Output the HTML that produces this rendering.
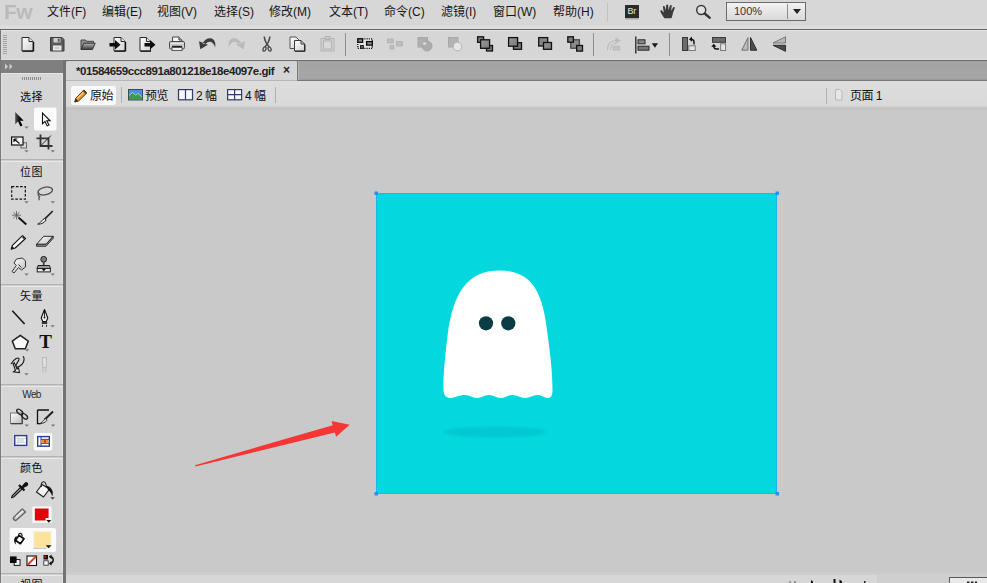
<!DOCTYPE html>
<html lang="zh-CN">
<head>
<meta charset="utf-8">
<title>Fireworks</title>
<style>
html,body{margin:0;padding:0;}
body{width:987px;height:583px;overflow:hidden;position:relative;background:#c9c9c9;
 font-family:"Liberation Sans","Noto Sans CJK SC",sans-serif;font-size:12px;color:#1a1a1a;}
.abs{position:absolute;}
#menubar{left:0;top:0;width:987px;height:29px;background:linear-gradient(#d7d7d7 0,#d7d7d7 25px,#dedede 27px,#dcdcdc 29px);}
#menubar .mi{position:absolute;top:4px;height:16px;line-height:16px;font-size:12px;white-space:nowrap;color:#151515;}
#logo{left:4px;top:0px;font-size:21px;font-weight:bold;color:#bababa;line-height:24px;letter-spacing:-0.5px;}
#tbline{left:0;top:29px;width:987px;height:1px;background:#666;}
#toolbar{left:0;top:30px;width:987px;height:30px;background:#d6d6d6;box-shadow:inset 0 1px 0 #e6e6e6, inset 0 -1px 0 #dfdfdf;}
#tabbar{left:0;top:60px;width:987px;height:20px;background:linear-gradient(#6c6c6c 0,#6c6c6c 1px,#a3a3a3 1px,#a6a6a6 18px,#999 20px);}
#viewbar{left:66px;top:80px;width:921px;height:31px;background:linear-gradient(#dddddd 0,#d9d9d9 26px,#c6c6c6 27.5px,#c2c2c2 29px,#c9c9c9 31px);}
#doctab{left:66px;top:61px;width:232px;height:20px;background:#d4d4d4;border-radius:2px 2px 0 0;}
#doctab .t{position:absolute;left:10px;top:2px;font-size:11.5px;line-height:16px;font-weight:bold;color:#222;white-space:nowrap;letter-spacing:-0.44px;}
#doctab .x{position:absolute;left:217px;top:1px;font-size:12px;line-height:16px;color:#222;font-weight:bold;}
#left{left:0;top:60px;width:63px;height:523px;background:#d6d6d6;}
#leftborder{left:63px;top:60px;width:3px;height:523px;background:#727272;}
#leftedge{left:0;top:30px;width:1px;height:553px;background:#7a7a7a;}
#lhead{left:1px;top:60px;width:62px;height:13px;background:#7f7f7f;}
.vb{position:absolute;font-size:12px;line-height:14px;letter-spacing:-0.5px;white-space:nowrap;color:#111;}
.sep{position:absolute;width:1px;background:#9a9a9a;}
.lab{position:absolute;left:0;width:63px;text-align:center;font-size:11px;line-height:12px;color:#0c0c0c;letter-spacing:0.5px;}
.div{position:absolute;left:1px;width:62px;height:3px;background:linear-gradient(#b2b2b2 0,#b2b2b2 1px,#cdcdcd 1px,#cdcdcd 2px,#e9e9e9 2px);}
#bottombar{left:66px;top:575px;width:921px;height:8px;background:#d7d7d7;}
svg{position:absolute;overflow:visible;}
</style>
</head>
<body>
<div id="menubar" class="abs">
 <div id="logo" class="abs">Fw</div>
 <div class="mi" style="left:47px">文件(F)</div>
 <div class="mi" style="left:102px">编辑(E)</div>
 <div class="mi" style="left:157px">视图(V)</div>
 <div class="mi" style="left:214px">选择(S)</div>
 <div class="mi" style="left:269px">修改(M)</div>
 <div class="mi" style="left:329px">文本(T)</div>
 <div class="mi" style="left:384px">命令(C)</div>
 <div class="mi" style="left:441px">滤镜(I)</div>
 <div class="mi" style="left:493px">窗口(W)</div>
 <div class="mi" style="left:553px">帮助(H)</div>
 <div class="sep" style="left:607px;top:3px;height:19px;background:#c2c2c2"></div>
 <!-- Br icon -->
 <div class="abs" style="left:624.500px;top:5px;width:14.500px;height:13px;background:#2b2b2b;color:#e4e4e4;font-size:9px;line-height:12px;text-align:center;letter-spacing:-0.2px;box-shadow:0 1.500px 0 #a8a8a8">Br</div>
 <!-- zoom box -->
 <div class="abs" style="left:726px;top:2px;width:80px;height:19px;box-sizing:border-box;border:1px solid #6c6c6c;background:linear-gradient(#f2f2f2,#d9d9d9);"></div>
 <div class="abs" style="left:787px;top:4px;width:1px;height:15px;background:#8c8c8c"></div>
 <div class="mi" style="left:734px;top:3px;color:#333;font-size:11px">100%</div>
 <div class="abs" style="left:793px;top:9px;width:0;height:0;border-left:4px solid transparent;border-right:4px solid transparent;border-top:5px solid #222"></div>
</div>
<div id="tbline" class="abs"></div>
<div id="toolbar" class="abs"></div>
<!-- TOOLBAR ICONS -->
<svg class="abs" style="left:0;top:0" width="987" height="62" viewBox="0 0 987 62">
 <defs>
  <linearGradient id="pg" x1="0" y1="0" x2="1" y2="1"><stop offset="0" stop-color="#ffffff"/><stop offset="1" stop-color="#d0d0d0"/></linearGradient>
  <linearGradient id="fold" x1="0" y1="0" x2="0" y2="1"><stop offset="0" stop-color="#b8b8b8"/><stop offset="1" stop-color="#3a3a3a"/></linearGradient>
  <linearGradient id="sq" x1="0" y1="0" x2="1" y2="1"><stop offset="0" stop-color="#9a9a9a"/><stop offset="1" stop-color="#787878"/></linearGradient>
 </defs>
 <!-- grip -->
 <g stroke="#a2a2a2" stroke-width="1">
  <path d="M3,35.5h4M3,37.5h4M3,39.5h4M3,41.5h4M3,43.5h4M3,45.5h4M3,47.5h4M3,49.5h4M3,51.5h4M3,53.5h4"/>
 </g>
 <!-- hand (menubar) -->
 <path fill="#3a3a3a" transform="translate(667.600 11.300) scale(1.080 1) translate(-666.500 -12)" d="M663.5,19 C662,16.5 660.5,14 659.8,12.2 C659.5,11.2 660.6,10.6 661.4,11.4 L663,13.4 L662.2,7.6 C662,6.5 663.6,6.2 663.9,7.3 L665,11.3 L665.2,5.9 C665.2,4.8 666.9,4.8 667,5.9 L667.4,11 L668.6,6.3 C668.9,5.3 670.4,5.6 670.3,6.7 L669.7,11.6 L671.6,8.2 C672.1,7.3 673.5,7.9 673.1,8.9 L671.6,13.2 C671.2,15.4 670.8,17.2 670,19 Z"/>
 <!-- magnifier -->
 <circle cx="701.200" cy="10" r="4.500" fill="#e2e2e2" stroke="#3a3a3a" stroke-width="1.500"/>
 <path d="M704.700,13.500 L709.800,17.800" stroke="#333" stroke-width="2.300" stroke-linecap="round"/>

 <!-- new doc -->
 <g>
  <path d="M22,37.5 h7 l4,4 v9.5 h-11z" fill="url(#pg)" stroke="#2a2a2a" stroke-width="1"/>
  <path d="M29,37.5 v4 h4" fill="#e8e8e8" stroke="#2a2a2a" stroke-width="1"/>
  <path d="M22.5,51.2 h11 M33.6,42 v9.2" stroke="#111" stroke-width="1.2" fill="none"/>
 </g>
 <!-- save -->
 <g>
  <path d="M50.5,37.5 h11.5 l2,2 v11.5 h-13.5z" fill="#5a5a5a" stroke="#3a3a3a" stroke-width="1"/>
  <rect x="53.5" y="38" width="7" height="4.5" fill="#cfcfcf"/>
  <rect x="57.8" y="38.6" width="1.8" height="3.2" fill="#555"/>
  <rect x="53" y="45.5" width="8.5" height="5" fill="#e9e9e9"/>
  <path d="M54.5,48 h5" stroke="#aaa" stroke-width="1"/>
 </g>
 <!-- open -->
 <g>
  <path d="M81,49.5 v-9.5 h4.5 l1.2,1.3 h6.8 v2" fill="#8f8f8f" stroke="#444" stroke-width="1"/>
  <path d="M81,49.5 l2.8,-6.3 h11.4 l-2.8,6.3z" fill="url(#fold)" stroke="#333" stroke-width="1"/>
 </g>
 <!-- import -->
 <g>
  <path d="M114,37.5 h7 l4,4 v9.5 h-11z" fill="url(#pg)" stroke="#2a2a2a" stroke-width="1"/>
  <path d="M121,37.5 v4 h4" fill="#e8e8e8" stroke="#2a2a2a" stroke-width="1"/>
  <path d="M114.5,51.2 h11 M125.6,42 v9.2" stroke="#111" stroke-width="1.2" fill="none"/>
  <path d="M109.5,43 h5.5 v-3 l5.5,4.7 l-5.5,4.7 v-3 h-5.5z" fill="#0c0c0c"/>
 </g>
 <!-- export -->
 <g>
  <path d="M140,37.5 h6.5 l4,4 v9.5 h-10.5z" fill="url(#pg)" stroke="#2a2a2a" stroke-width="1"/>
  <path d="M146.5,37.5 v4 h4" fill="#e8e8e8" stroke="#2a2a2a" stroke-width="1"/>
  <path d="M140.5,51.2 h10.5" stroke="#111" stroke-width="1.2" fill="none"/>
  <path d="M144.5,43 h5.5 v-3 l5.5,4.7 l-5.5,4.7 v-3 h-5.5z" fill="#0c0c0c"/>
 </g>
 <!-- print -->
 <g>
  <path d="M172.500,42 v-5 h6.500 l3,3 v2z" fill="#f4f4f4" stroke="#4a4a4a" stroke-width="1"/>
  <path d="M179,37 v3 h3" fill="#d0d0d0" stroke="#333" stroke-width="1"/>
  <rect x="169.500" y="41.500" width="15" height="7.500" rx="1.400" fill="#cbcbcb" stroke="#4d4d4d" stroke-width="1"/>
  <path d="M170.500,43.500 h13" stroke="#e6e6e6" stroke-width="1"/>
  <rect x="172" y="45.800" width="10" height="1.700" fill="#222"/>
  <rect x="172" y="47.500" width="10" height="3" fill="#f0f0f0" stroke="#4d4d4d" stroke-width=".9"/>
 </g>
 <!-- undo -->
 <path fill="#3c3c3c" d="M199,41.200 L200.300,49.200 L207.900,44.700 Z M202.500,43.500 C204.500,39.800 207.500,38.100 210.500,38.300 C214.200,38.700 216.200,42.500 215.100,47.600 C214.400,44.200 212.200,41.800 209.600,41.800 C208,41.800 206.800,42.600 205.800,44.200 Z"/>
 <!-- redo (disabled) -->
 <path fill="#b9b9b9" d="M245,41.200 L243.700,49.200 L236.100,44.700 Z M241.500,43.500 C239.500,39.800 236.500,38.100 233.500,38.300 C229.800,38.700 227.800,42.500 228.900,47.600 C229.600,44.200 231.800,41.800 234.400,41.800 C236,41.800 237.200,42.600 238.200,44.200 Z"/>
 <!-- cut -->
 <g fill="none" stroke="#4a4a4a">
  <path d="M264.200,36.500 C264.800,41 266.800,44.500 269.200,47 M269.900,36.500 C269.300,41 267.300,44.500 264.900,47" stroke-width="1.600"/>
  <ellipse cx="264.500" cy="49" rx="1.400" ry="2.200" stroke-width="1.300" transform="rotate(20 264.500 49)"/>
  <ellipse cx="269.600" cy="49" rx="1.400" ry="2.200" stroke-width="1.300" transform="rotate(-20 269.600 49)"/>
 </g>
 <!-- copy -->
 <g>
  <path d="M290,37 h6 l3,3 v8.5 h-9z" fill="url(#pg)" stroke="#555" stroke-width="1"/>
  <path d="M294.5,40.5 h6.5 l3.5,3.5 v7 h-10z" fill="url(#pg)" stroke="#3a3a3a" stroke-width="1"/>
  <path d="M301,40.500 v3.500 h3.500" fill="none" stroke="#3a3a3a" stroke-width="1"/>
  <path d="M295,51.3 h10 M304.900,44.500 v6.800" stroke="#222" stroke-width="1.1"/>
 </g>
 <!-- paste (disabled) -->
 <g fill="none" stroke="#b3b3b3" stroke-width="1">
  <rect x="321" y="38.500" width="13" height="12.500" fill="#cfcfcf"/>
  <rect x="323.500" y="41" width="8" height="8" fill="#d8d8d8"/>
  <rect x="325" y="36.500" width="5" height="3" fill="#c6c6c6"/>
 </g>
 <!-- separators -->
 <g stroke="#8e8e8e" stroke-width="1">
  <path d="M345.5,33 v23 M593.500,33 v23 M669.500,33 v23"/>
 </g>
 <!-- group -->
 <g>
  <rect x="357.800" y="38.800" width="14.500" height="9.500" fill="#e4e4e4" stroke="#0a0a0a" stroke-width="1.300" stroke-dasharray="1.100 1.100"/>
  <rect x="357.800" y="38.800" width="4.800" height="3.500" fill="#8a8a8a" stroke="#0a0a0a" stroke-width="1.300"/>
  <rect x="366.600" y="41.600" width="5.700" height="3.500" fill="#8a8a8a" stroke="#0a0a0a" stroke-width="1.300"/>
  <rect x="360.600" y="45.600" width="2.700" height="2.700" fill="#777" stroke="#1a1a1a" stroke-width="1.100"/>
 </g>
 <!-- ungroup (disabled) -->
 <g fill="#bdbdbd" stroke="#b2b2b2" stroke-width=".8">
  <rect x="387.500" y="39" width="6" height="4"/>
  <rect x="396.500" y="41.500" width="6" height="4.500"/>
  <rect x="390" y="45.500" width="4" height="3.500"/>
 </g>
 <!-- join (disabled) -->
 <g>
  <rect x="418" y="37.500" width="9.500" height="9.500" fill="#b0b0b0" stroke="#a8a8a8"/>
  <circle cx="427" cy="46" r="5" fill="#adadad" stroke="#a6a6a6"/>
  <circle cx="424.500" cy="43.500" r="1.600" fill="#d9d9d9"/>
 </g>
 <!-- split (disabled) -->
 <g>
  <rect x="448.500" y="37.500" width="9.500" height="9.500" fill="#b3b3b3" stroke="#a9a9a9"/>
  <circle cx="457.500" cy="46.500" r="4.300" fill="#e6e6e6" stroke="#b5b5b5"/>
 </g>
 <!-- bring to front -->
 <g stroke="#111" stroke-width="1.300">
  <rect x="477.600" y="36.800" width="6" height="5.500" fill="#7d7d7d"/>
  <rect x="486.500" y="45.500" width="6" height="5.500" fill="#7d7d7d"/>
  <rect x="480.600" y="39.800" width="9" height="8.500" fill="url(#sq)"/>
 </g>
 <!-- bring forward -->
 <g stroke="#111" stroke-width="1.300">
  <rect x="513.500" y="42.700" width="8" height="6.600" fill="#7a7a7a"/>
  <rect x="508.600" y="37.600" width="9" height="8.600" fill="url(#sq)"/>
 </g>
 <!-- send backward -->
 <g stroke="#111" stroke-width="1.300">
  <rect x="538.700" y="37.600" width="9" height="8.400" fill="#858585"/>
  <rect x="543.500" y="42.500" width="8" height="6.800" fill="url(#sq)"/>
 </g>
 <!-- send to back -->
 <g stroke="#111" stroke-width="1.300">
  <rect x="570.800" y="39.800" width="8.600" height="8.400" fill="#8a8a8a" stroke="#444"/>
  <rect x="567.800" y="36.800" width="5.600" height="5.400" fill="#7d7d7d"/>
  <rect x="576.700" y="45.500" width="5.800" height="5.600" fill="#7d7d7d"/>
 </g>
 <!-- disabled curve icon -->
 <g fill="none" stroke="#bcbcbc" stroke-width="1.200">
  <path d="M607.500,50 c0,-6 3,-9.500 9,-9.500 M610.500,50 c0,-4 2,-6.500 6,-6.500"/>
  <path d="M616,38.500 l3.500,2 l-3.500,2z" fill="#bcbcbc"/>
  <rect x="613.500" y="46.500" width="6" height="3.500" fill="#c6c6c6"/>
 </g>
 <!-- align -->
 <g>
  <path d="M635.800,36.500 v17" stroke="#222" stroke-width="1.300"/>
  <rect x="638" y="39.800" width="7" height="4" fill="#888" stroke="#2a2a2a" stroke-width="1"/>
  <rect x="638" y="46.200" width="11" height="4" fill="#777" stroke="#2a2a2a" stroke-width="1"/>
  <path d="M651.800,43.300 h6.200 l-3.100,4.400z" fill="#1a1a1a"/>
 </g>
 <!-- rotate ccw -->
 <g>
  <rect x="682.500" y="37.500" width="5" height="13" fill="#6c6c6c" stroke="#3a3a3a" stroke-width="1"/>
  <rect x="688.800" y="45.800" width="6.500" height="4.700" fill="#e4e4e4" stroke="#7a7a7a" stroke-width="1"/>
  <path d="M694,44.500 v-2.500 c0,-1.800 -1,-2.800 -3,-2.800" fill="none" stroke="#111" stroke-width="1.400"/>
  <path d="M692,36.600 l-3,2.600 l3,2.600z" fill="#111"/>
 </g>
 <!-- rotate cw -->
 <g>
  <rect x="712.500" y="37.500" width="13" height="4.800" fill="#6c6c6c" stroke="#3a3a3a" stroke-width="1"/>
  <rect x="720.600" y="43.800" width="5" height="6.700" fill="#e4e4e4" stroke="#7a7a7a" stroke-width="1"/>
  <path d="M719,49 h-2.500 c-1.800,0 -2.800,-1 -2.800,-3" fill="none" stroke="#111" stroke-width="1.400"/>
  <path d="M711.200,46.800 l2.600,-3 l2.600,3z" fill="#111"/>
 </g>
 <!-- flip h -->
 <g stroke-width="1">
  <path d="M748,37.500 v12.700 h-6.300z" fill="#b9b9b9" stroke="#777"/>
  <path d="M750.500,37.500 v12.700 h6.300z" fill="#4c4c4c" stroke="#2c2c2c"/>
 </g>
 <!-- flip v -->
 <g stroke-width="1">
  <path d="M785.500,36.800 v6.200 h-12.500z" fill="#b9b9b9" stroke="#777"/>
  <path d="M785.500,51.300 v-6 h-12.500z" fill="#4c4c4c" stroke="#2c2c2c"/>
 </g>
</svg>
<div id="tabbar" class="abs"></div>
<div id="viewbar" class="abs"></div>
<div id="doctab" class="abs"><span class="t">*01584659ccc891a801218e18e4097e.gif</span><span class="x">×</span></div>

<!-- view bar content -->
<div class="abs" style="left:66px;top:80px;width:232px;height:1px;background:#b6b6b6"></div>
<div class="abs" style="left:298px;top:80px;width:689px;height:1px;background:#767676"></div>
<div class="abs" style="left:297px;top:61px;width:1px;height:20px;background:#7c7c7c"></div>
<div class="abs" style="left:298px;top:61px;width:1px;height:19px;background:#b4b4b4"></div>
<div class="abs" style="left:71px;top:86px;width:45px;height:19px;background:#fafafa;border-radius:3px;"></div>
<div class="vb" style="left:90px;top:89px">原始</div>
<div class="sep" style="left:121px;top:87px;height:16px;background:#b0b0b0"></div>
<div class="vb" style="left:145px;top:89px">预览</div>
<div class="vb" style="left:196px;top:89px">2 幅</div>
<div class="vb" style="left:245px;top:89px">4 幅</div>
<div class="sep" style="left:275px;top:87px;height:16px;background:#b0b0b0"></div>
<div class="sep" style="left:826px;top:88px;height:16px;background:#b0b0b0"></div>
<div class="vb" style="left:850px;top:89px">页面 1</div>

<!-- VIEWBAR ICONS -->
<svg class="abs" style="left:66px;top:80px" width="921" height="30" viewBox="66 80 921 30">
 <!-- pencil (orange) -->
 <g>
  <path d="M83.900,89.900 l3,3 l-8.300,8 l-3.900,1.200 l1.100,-3.900z" fill="#ee9a2a" stroke="#4e3210" stroke-width="1" stroke-linejoin="round"/>
  <path d="M74.800,102 l1,-3.200 l2.300,2.200z" fill="#2e2010"/>
  <path d="M83.900,89.900 l3,3 l-1.300,1.200 l-3,-3z" fill="#6e4418"/>
  <path d="M77.200,98.200 l6.200,-5.900" stroke="#fbd28a" stroke-width="1.100"/>
 </g>
 <!-- preview icon -->
 <g>
  <rect x="128.500" y="89.500" width="14" height="10.500" fill="#4b8fe2" stroke="#3c4a5c" stroke-width="1"/>
  <path d="M129,99.500 v-4 l3.500,-3 l3,2.600 l2.500,-1.600 l4,3.500 v2.500z" fill="#3c9a48"/>
  <path d="M129,95.500 l3.500,-3 l3,2.600 l2.500,-1.600 l4,3.500" fill="none" stroke="#cfe6c8" stroke-width=".7"/>
 </g>
 <!-- 2-up -->
 <g fill="#f7f7ff" stroke="#34396a" stroke-width="1.200">
  <rect x="178.500" y="89.600" width="14" height="10.200"/>
  <path d="M185.500,89.600 v10.200"/>
 </g>
 <!-- 4-up -->
 <g fill="#f7f7ff" stroke="#34396a" stroke-width="1.200">
  <rect x="227.600" y="89.600" width="14" height="10.200"/>
  <path d="M234.600,89.600 v10.200 M227.600,94.700 h14"/>
 </g>
 <!-- page icon (faint) -->
 <g fill="#e6e6e6" stroke="#b8b8b8" stroke-width="1">
  <path d="M835.500,89.500 h4.500 l2,2 v8.500 h-6.500z"/>
 </g>
</svg>
<!-- left panel -->
<div id="left" class="abs"></div>
<div id="leftborder" class="abs"></div>
<div id="lhead" class="abs"></div>
<div class="abs" style="left:1px;top:73px;width:62px;height:1px;background:#e6e6e6"></div>
<div class="abs" style="left:62px;top:73px;width:1px;height:510px;background:#e2e2e2"></div>
<div class="abs" style="left:1px;top:73px;width:1px;height:510px;background:#e0e0e0"></div>
<div id="leftedge" class="abs"></div>
<div class="lab" style="top:91px">选择</div>
<div class="div" style="top:159px"></div>
<div class="lab" style="top:166px">位图</div>
<div class="div" style="top:284px"></div>
<div class="lab" style="top:290px">矢量</div>
<div class="div" style="top:384px"></div>
<div class="lab" style="top:389px;letter-spacing:-0.7px;font-size:10px;color:#2a2a2a">Web</div>
<div class="div" style="top:456px"></div>
<div class="lab" style="top:462px">颜色</div>
<div class="div" style="top:573px"></div>
<div class="lab" style="top:579px">视图</div>

<!-- LEFT PANEL ICONS -->
<svg class="abs" style="left:0;top:60px" width="66" height="523" viewBox="0 60 66 523">
 <defs>
  <linearGradient id="ptr" x1="0" y1="0" x2="1" y2="0"><stop offset="0" stop-color="#555"/><stop offset=".6" stop-color="#000"/></linearGradient>
  <linearGradient id="wg" x1="0" y1="0" x2="1" y2="1"><stop offset="0" stop-color="#ffffff"/><stop offset="1" stop-color="#bdbdbd"/></linearGradient>
 </defs>
 <!-- header chevrons -->
 <path d="M5,63.500 l3,3 l-3,3z M9.500,63.500 l3,3 l-3,3z" fill="#cfcfcf"/>
 <!-- grip dots -->
 <path d="M22.500,77 v3 M24.500,77 v3 M26.500,77 v3 M28.500,77 v3 M30.500,77 v3 M32.500,77 v3 M34.500,77 v3 M36.500,77 v3 M38.500,77 v3 M40.500,77 v3" stroke="#8c8c8c" stroke-width="1"/>
 <!-- selected bg for subselect -->
 <rect x="34" y="107.500" width="22.500" height="23" rx="2" fill="#fbfbfb"/>
 <!-- pointer -->
 <path d="M15.200,112 v12.300 l2.800,-2.700 l2.400,4.900 l2.100,-1 l-2.400,-4.700 h3.600z" fill="url(#ptr)"/>
 <!-- subselect -->
 <path d="M42.500,113 v10.800 l2.500,-2.300 l2.200,4.400 l1.800,-0.800 l-2.200,-4.300 h3.300z" fill="#fff" stroke="#111" stroke-width="1.100" stroke-linejoin="miter"/>
 <!-- dropdown triangles (gray) -->
 <g fill="#7a7a7a">
  <path d="M24.300,126.400 h4.400 l-2.200,2.300z"/>
  <path d="M24.300,150.300 h4.400 l-2.200,2.300z"/>
  <path d="M50.600,150.300 h4.400 l-2.200,2.300z"/>
  <path d="M24.300,201.200 h4.400 l-2.200,2.300z"/>
  <path d="M50.600,201.200 h4.400 l-2.200,2.300z"/>
  <path d="M24.300,273.500 h4.400 l-2.200,2.300z"/>
  <path d="M50.600,273.500 h4.400 l-2.200,2.300z"/>
  <path d="M50.400,325.300 h4.400 l-2.200,2.300z"/>
  <path d="M25,349.300 h4.400 l-2.200,2.300z"/>
  <path d="M24.300,373.200 h4.400 l-2.200,2.300z"/>
  <path d="M24.500,424.500 h4.400 l-2.200,2.300z"/>
  <path d="M50.800,424.500 h4.400 l-2.200,2.300z"/>
  <path d="M50.400,497.200 h4.400 l-2.200,2.300z" fill="#333"/>
 </g>
 <!-- scale tool -->
 <rect x="21" y="142.800" width="5.500" height="5.200" fill="#dcdcdc" stroke="#666" stroke-width="1"/>
 <rect x="11.600" y="137" width="11.400" height="8" fill="#f4f4f4" stroke="#111" stroke-width="1.200"/>
 <path d="M14,139 l5.500,4.500 M14,139 h3.200 M14,139 v3" stroke="#111" stroke-width="1.200" fill="none"/>
 <!-- crop tool -->
 <g fill="none" stroke="#333" stroke-width="1.800">
  <path d="M40.500,134.500 v11.500 h12"/>
  <path d="M36.500,138.300 h12 v11.200"/>
 </g>
 <path d="M41.500,145 l9.500,-9.500" stroke="#222" stroke-width="1"/>
 <!-- marquee -->
 <rect x="11.700" y="186.600" width="13.600" height="12.600" fill="none" stroke="#111" stroke-width="1.200" stroke-dasharray="2.600 1.600"/>
 <!-- lasso -->
 <g fill="none" stroke="#4d4d4d" stroke-width="1.300">
  <ellipse cx="45.200" cy="191" rx="7.400" ry="3.800" transform="rotate(-12 45.200 191)"/>
  <path d="M39,192.500 c-1.400,1.800 -0.800,3.400 0.600,4.200 c-0.800,1 -1,2.200 -0.400,3.600"/>
 </g>
 <!-- wand -->
 <g stroke="#222" fill="none">
  <path d="M18.500,217.500 l7.800,7" stroke-width="1.900" stroke="#111"/>
  <path d="M16.500,211 v8.500 M12,215.200 h9 M13.400,212.200 l6.200,6 M19.600,212.200 l-6.200,6" stroke-width=".8" stroke="#555"/>
 </g>
 <!-- brush -->
 <path d="M52.800,211 l-9,8.800" stroke="#222" stroke-width="1.700"/>
 <path d="M44.600,218.400 l1.600,1.600 c-2,3 -5,4.300 -8.500,4.200 c2.300,-1 3.600,-3.400 6.900,-5.800z" fill="#e8e8e8" stroke="#222" stroke-width="1"/>
 <!-- pencil -->
 <g>
  <path d="M22.500,235.700 l3,2.800 l-10.300,9.500 l-4,1.200 l1.200,-3.800z" fill="#f6f6f6" stroke="#111" stroke-width="1.100" stroke-linejoin="round"/>
  <path d="M11.200,249.200 l1,-3 l2,1.900z" fill="#111"/>
  <circle cx="23.400" cy="237.700" r="1" fill="#222"/>
 </g>
 <!-- eraser -->
 <path d="M43.700,236.300 h9.500 l-7.200,8 h-9.500z" fill="url(#wg)" stroke="#2a2a2a" stroke-width="1"/>
 <path d="M36.500,244.300 h9.500 l7.200,-8 v2 l-7.200,8 h-9.500z" fill="#8a8a8a" stroke="#2a2a2a" stroke-width=".9"/>
 <!-- blur / finger -->
 <g>
  <path d="M16.500,259 l6,-1 l3,3 v6 l-4,3 l-3,-2.500 l-4.500,5.500 l-2,-1.500 l4.300,-6 l-2.300,-2.500z" fill="url(#wg)" stroke="#333" stroke-width="1"/>
  <path d="M18.500,264.500 l3,3" stroke="#333" stroke-width="1"/>
 </g>
 <!-- stamp -->
 <g>
  <circle cx="43.700" cy="259.300" r="2.900" fill="#7a7a7a" stroke="#222" stroke-width="1"/>
  <path d="M42.800,262 h1.800 v3.500 h-1.800z" fill="#444"/>
  <path d="M38,265.500 h11.500 l1,3 h-13.500z" fill="#999" stroke="#222" stroke-width="1"/>
  <rect x="37.200" y="268.500" width="13.200" height="3.400" fill="#e6e6e6" stroke="#222" stroke-width="1"/>
  <path d="M41.700,269 h4.200 l-2.100,2.300z" fill="#111"/>
 </g>
 <!-- line -->
 <path d="M12.300,310.800 l12.300,13.200" stroke="#111" stroke-width="1.500"/>
 <!-- pen -->
 <g>
  <path d="M44.500,309.500 l3.300,8.500 l-1.500,3.500 h-3.600 l-1.500,-3.500z" fill="#f0f0f0" stroke="#111" stroke-width="1.100" stroke-linejoin="round"/>
  <path d="M44.500,310.500 v6" stroke="#111" stroke-width=".9"/>
  <circle cx="44.500" cy="317.500" r="1" fill="#111"/>
  <rect x="41.800" y="322.200" width="5.400" height="1.600" fill="#111"/>
  <path d="M42.500,324.800 v2 M46.500,324.800 v2" stroke="#333" stroke-width="1"/>
 </g>
 <!-- polygon -->
 <path d="M20.300,335.300 l8,5.800 l-3,7.600 h-10 l-3,-7.600z" fill="#f8f8f8" stroke="#222" stroke-width="1.500" stroke-linejoin="round"/>
 <!-- freeform -->
 <g fill="none" stroke="#1a1a1a" stroke-width="1.100">
  <path d="M11,364 c3,-5 7,-7 8,-5.500 c1,1.500 -4,6 -3,8 c1,2 6,-1 7.500,-4.500 c0.800,-2.200 0.600,-4.500 -0.300,-5.800"/>
  <path d="M13,363.500 l2.500,6.800 l-2,1.500 l6,0.700 l-1,-4.500 l-1.500,1.200 l-2.600,-6.500z" fill="#eee"/>
 </g>
 <!-- knife (disabled) -->
 <g fill="#dedede" stroke="#b9b9b9" stroke-width=".9">
  <rect x="42.500" y="357.500" width="3.800" height="10"/>
  <path d="M43,367.500 v5 M45.800,367.500 v5"/>
 </g>
 <!-- hotspot tool -->
 <g>
  <rect x="10.500" y="413" width="11.500" height="10.500" fill="url(#wg)" stroke="#777" stroke-width="1"/>
  <path d="M11,423.800 h11.300 v-10" fill="none" stroke="#333" stroke-width="1"/>
  <g fill="none" stroke="#222" stroke-width="1.300">
   <ellipse cx="19.800" cy="412" rx="3.600" ry="2" transform="rotate(40 19.800 412)"/>
   <ellipse cx="24.500" cy="416.300" rx="3.600" ry="2" transform="rotate(40 24.500 416.300)"/>
  </g>
 </g>
 <!-- slice tool -->
 <g>
  <path d="M37.500,410 h11.500 M37.500,410 v13.700 h3" fill="none" stroke="#111" stroke-width="1.300"/>
  <path d="M53,411.500 l-8.500,8.200" stroke="#222" stroke-width="2"/>
  <path d="M45.500,418.700 l1.600,1.600 c-1.700,2 -4.300,3.300 -7.600,3.500 c2.200,-1 3.600,-2.900 6,-5.100z" fill="#e8e8e8" stroke="#222" stroke-width=".9"/>
 </g>
 <!-- hide slices -->
 <g>
  <rect x="14.700" y="435.600" width="12" height="9.800" fill="#fafafa" stroke="#2b3f93" stroke-width="1.400"/>
  <path d="M18,436 v9 M14.700,438.600 h12 M14.700,442.300 h12" stroke="#8a94c6" stroke-width=".8" stroke-dasharray="1 1"/>
  <rect x="18.500" y="439" width="5" height="3" fill="#d5e8cf"/>
 </g>
 <!-- show slices (selected) -->
 <rect x="33.800" y="433" width="18.400" height="17.500" rx="2" fill="#fbfbfb"/>
 <g>
  <rect x="37.700" y="436.600" width="11.600" height="9.600" fill="#fff" stroke="#2b3f93" stroke-width="1.400"/>
  <path d="M41,436.600 v9.600 M41,439.400 h8.300 M41,443.300 h8.300" stroke="#2b3f93" stroke-width="1"/>
  <rect x="41.600" y="439.900" width="7" height="2.900" fill="#f0922a"/>
  <rect x="44" y="439.900" width="2" height="2.900" fill="#e23a1e"/>
 </g>
 <!-- eyedropper -->
 <g>
  <path d="M20.500,487.500 l-8.200,8.200 l-0.700,2 l2,-0.700 l8.400,-8z" fill="#f2f2f2" stroke="#1a1a1a" stroke-width="1.300" stroke-linejoin="round"/>
  <path d="M19,485 l5.500,5.500" stroke="#111" stroke-width="2.200"/>
  <path d="M22,487.500 l3.200,-3.800 c1.300,-1.300 2.800,0.200 1.500,1.500z" fill="#222" stroke="#111" stroke-width="2"/>
 </g>
 <!-- paint bucket -->
 <g>
  <path d="M42,484.500 l7.500,4.500 l-6,8 l-7,-5z" fill="#f4f4f4" stroke="#222" stroke-width="1.200" stroke-linejoin="round"/>
  <path d="M41.500,487 c-0.800,-3 0.300,-5.300 2,-5.300 c1.700,0 2.700,2.200 2.800,5.500" fill="none" stroke="#222" stroke-width="1.100"/>
  <path d="M46,485.500 c3,0.500 5.600,2.500 6.500,5.500 c0.500,1.800 0.400,3.800 -0.300,5.200 c-0.800,-2.800 -2.200,-5 -4,-6z" fill="#111"/>
 </g>
 <!-- stroke pencil (gray) -->
 <path d="M22.300,509 l3.200,3 l-9,8 c-1.500,1.200 -4,-1.200 -2.700,-2.700z" fill="#cfcfcf" stroke="#666" stroke-width="1.500" stroke-linejoin="round"/>
 <path d="M15.800,517.200 l7.200,-6.500" stroke="#fafafa" stroke-width="1.100"/>
 <!-- red swatch -->
 <rect x="32.500" y="506.500" width="19" height="16.300" fill="#fdfdfd"/>
 <path d="M34.800,508.600 h13.800 v9.400 h-3 v2.600 h-10.800z" fill="#e00505"/>
 <path d="M46.300,519.900 h5 l-2.500,2.800z" fill="#111"/>
 <!-- fill row selected bg -->
 <rect x="9.600" y="528" width="46.500" height="24" rx="2" fill="#fbfbfb"/>
 <!-- small bucket -->
 <g>
  <path d="M19,535.500 l5,3.200 l-3.600,5 l-5,-3.500z" fill="#fff" stroke="#0a0a0a" stroke-width="1.700" stroke-linejoin="round"/>
  <path d="M18.600,536.500 c-0.300,-2 0.600,-3.300 1.700,-3.300 c1.100,0 1.900,1.300 1.900,3.400" fill="none" stroke="#111" stroke-width="1.100"/>
  <path d="M16.500,536 c-2,1 -2.800,3.500 -2.200,6 c0.300,1 0.800,2 1.500,2.500 c-0.300,-2 0,-4 1.200,-5.500z" fill="#111"/>
 </g>
 <!-- cream swatch -->
 <rect x="33.800" y="531.600" width="17.200" height="16.200" fill="#fbe39b" stroke="#f3f0e4" stroke-width="1"/>
 <path d="M33.500,548.300 h13" stroke="#bdbdbd" stroke-width="1"/>
 <path d="M45.800,545.300 h5.600 l-2.800,3z" fill="#111"/>
 <!-- small icons -->
 <rect x="14.200" y="559.600" width="5.800" height="5.800" fill="#fff" stroke="#111" stroke-width="1"/>
 <rect x="10" y="556.400" width="6.600" height="6.600" fill="#0a0a0a"/>
 <rect x="27" y="556" width="9.500" height="9.500" fill="#fff" stroke="#111" stroke-width="1.100"/>
 <path d="M27.500,565 l8.600,-8.600" stroke="#e23a1e" stroke-width="2"/>
 <rect x="43.500" y="555" width="4.500" height="4.500" fill="#111"/>
 <rect x="44.300" y="555.800" width="2" height="2" fill="#c41b1b"/>
 <rect x="43.800" y="560.800" width="4.400" height="4.400" fill="#fff" stroke="#333" stroke-width=".9"/>
 <path d="M50.500,556.800 c3.600,0.800 3.600,5.800 0,6.600" fill="none" stroke="#111" stroke-width="1.400"/>
 <path d="M48.800,556.800 l2.800,-2.300 v4.600z M48.800,563.400 l2.800,-2.300 v4.600z" fill="#111"/>
</svg>
<div class="abs" style="left:39px;top:332px;width:13px;text-align:center;font-family:'Liberation Serif',serif;font-weight:bold;font-size:19px;line-height:20px;color:#111">T</div>
<!-- canvas -->
<div class="abs" id="doc" style="left:376px;top:193px;width:401px;height:301px;background:#04d7dd;box-sizing:border-box;border:1px solid #22b2ee;"></div>
<svg class="abs" style="left:0;top:0" width="987" height="583" viewBox="0 0 987 583">
 <!-- shadow -->
 <defs><filter id="bl" x="-10%" y="-50%" width="120%" height="200%"><feGaussianBlur stdDeviation="0.9"/></filter></defs>
 <ellipse cx="495" cy="432" rx="51" ry="5.500" fill="#02c9d1" filter="url(#bl)"/>
 <!-- ghost -->
 <path fill="#ffffff" d="M499.500,270.500 C467,270.500 453,293 447.500,336 C445,358 443,376 443.500,390 C443.700,396 447,398.300 451,398 C456,397.600 459,395 464.800,395 C470,395 472,398 477,398 C482,398 484,395 488.900,395 C494,395 496,398 500.500,398 C505.500,398 507.500,395 512.300,395 C517.500,395 520,398 525,398 C530,398 532.500,395 537.800,395 C542,395 544,398 547.500,398 C551,398 552.500,395.500 552.500,390 C552.500,372 550,352 547.500,334 C543,292 532,270.500 499.500,270.500 Z"/>
 <circle cx="486" cy="323.3" r="7.1" fill="#0b3b45"/>
 <circle cx="508.3" cy="323.3" r="7.1" fill="#0b3b45"/>
 <!-- handles -->
 <g fill="#2a8ff0">
  <rect x="374.5" y="191.5" width="3.5" height="3.5"/>
  <rect x="775.5" y="191.5" width="3.5" height="3.5"/>
  <rect x="374.5" y="492" width="3.5" height="3.5"/>
  <rect x="775.5" y="492" width="3.5" height="3.5"/>
 </g>
 <!-- red arrow -->
 <path fill="#f63535" d="M195,465.200 L332.800,425.300 L331.400,421.100 L349.700,424.800 L336.100,436.700 L334.800,432.400 L195.500,466.500 Z"/>
</svg>
<div id="bottombar" class="abs"></div>
<div class="abs" style="left:66px;top:571px;width:921px;height:4px;background:linear-gradient(#c9c9c9,#cecece)"></div>
<div class="abs" style="left:877px;top:575px;width:110px;height:8px;background:#cfcfcf"></div>
<div class="abs" style="left:949px;top:577px;width:40px;height:8px;box-sizing:border-box;border:1px solid #5a5a5a;background:#e9e9e9"></div>
<svg class="abs" style="left:760px;top:575px" width="227" height="8" viewBox="760 575 227 8">
 <path d="M789,583 v-2 h2 v2z M794,583 v-2 h2 v2z" fill="#9a9a9a"/>
 <path d="M811,583 v-3 l2,1.500 v1.500z" fill="#111"/>
 <path d="M833.500,583 v-4 h2 v4z M839.500,583 v-3.500 l2.500,1.800 v1.700z" fill="#111"/>
 <path d="M864,583 v-2 h1.500 v2z" fill="#222"/>
 <path d="M967,583 v-1.500 h2.500 v1.500z M971,583 v-1.500 h2.500 v1.500z M975,583 v-1.500 h2 v1.500z" fill="#222"/>
</svg>
</body>
</html>
